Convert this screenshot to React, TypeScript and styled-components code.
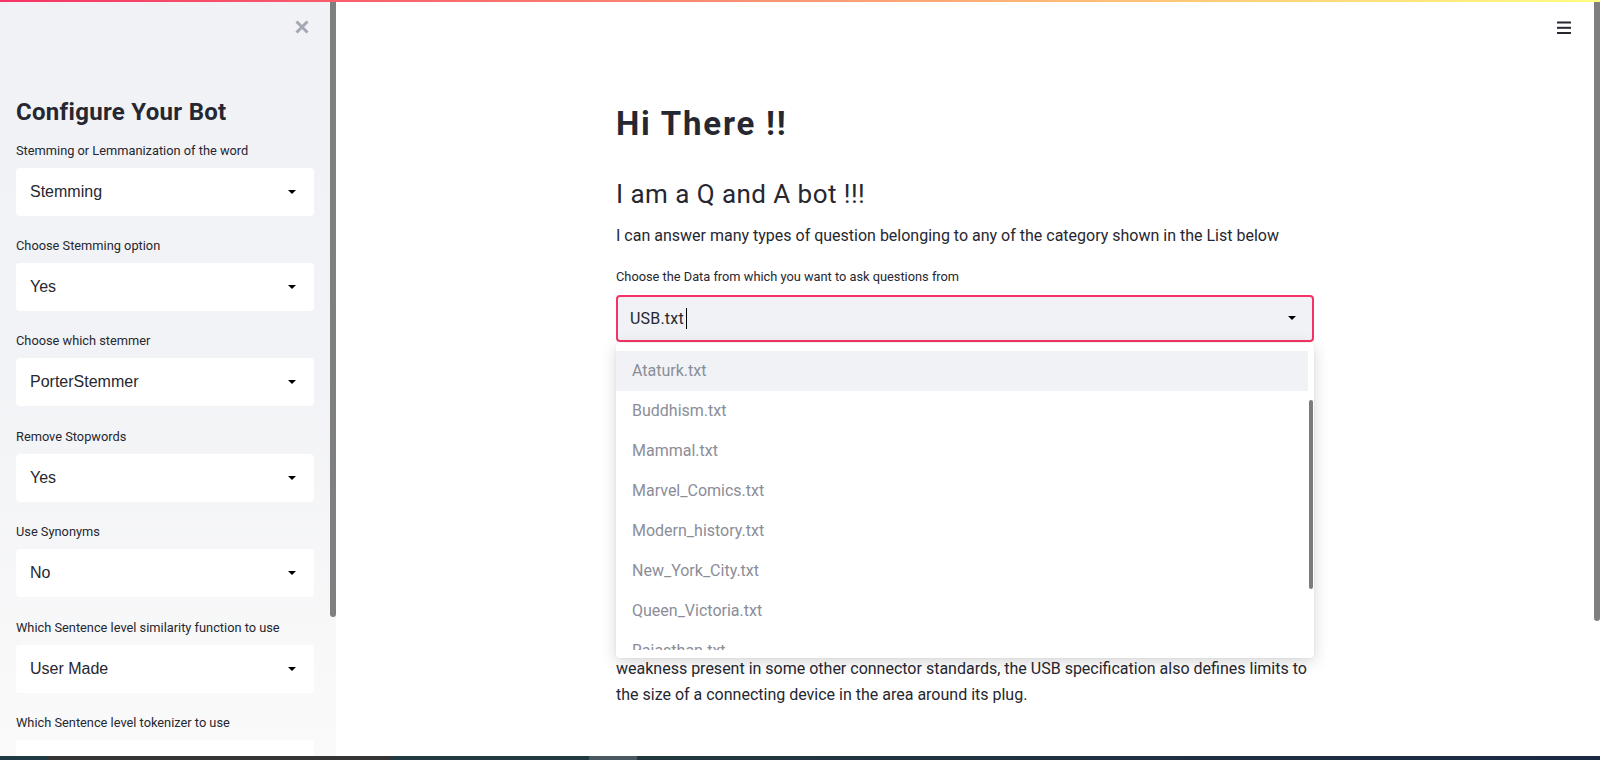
import React from "react";
import styled, { createGlobalStyle } from "styled-components";

const plex = `Roboto, "Liberation Sans", sans-serif`;
const arial = `"Liberation Sans", Arial, sans-serif`;

const GlobalStyle = createGlobalStyle`
  html, body {
    margin: 0;
    padding: 0;
    width: 1600px;
    height: 760px;
    overflow: hidden;
    background: #ffffff;
  }
  body {
    font-family: ${plex};
    color: #262730;
  }
  *, *::before, *::after { box-sizing: border-box; }
`;

const Page = styled.div`
  position: relative;
  width: 1600px;
  height: 760px;
  display: flex;
  flex-direction: column;
`;

const Decoration = styled.div`
  position: absolute;
  top: 0;
  left: 0;
  right: 0;
  height: 2px;
  background: linear-gradient(90deg, #f63366, #fffd80);
  z-index: 20;
`;

const Body = styled.div`
  flex: 1;
  min-height: 0;
  display: flex;
`;

const Sidebar = styled.aside`
  flex: none;
  width: 336px;
  display: flex;
  background: linear-gradient(180deg, #f0f2f6 0%, #f2f3f6 50%, #fafafa 100%);
`;

const SidebarInner = styled.div`
  flex: 1;
  display: flex;
  flex-direction: column;
  padding: 20px 16px 0 16px;
  overflow: hidden;
`;

const CloseButton = styled.div`
  align-self: flex-end;
  width: 14px;
  height: 14px;
  margin-right: 5px;
  display: flex;
`;

const SidebarTitle = styled.h2`
  margin: 62.8px 0 0 0;
  font-size: 24px;
  line-height: 30px;
  font-weight: 700;
  letter-spacing: 0.3px;
  color: #262730;
`;

const Fields = styled.div`
  margin-top: 13.8px;
  display: flex;
  flex-direction: column;
  gap: 20.4px;
`;

const Field = styled.div`
  display: flex;
  flex-direction: column;
  gap: 7px;
`;

const Label = styled.label`
  font-size: 12.8px;
  line-height: 20px;
  color: #262730;
  white-space: nowrap;
`;

const SideSelect = styled.div`
  height: 48px;
  background: #ffffff;
  border-radius: 4px;
  display: flex;
  align-items: center;
  justify-content: space-between;
  padding: 0 18px 0 14px;
  font-family: ${arial};
  font-size: 16px;
  color: #262730;
`;

const Rail = styled.div`
  flex: none;
  width: 6px;
  display: flex;
  flex-direction: column;
`;

const Thumb = styled.div<{ $h: number }>`
  height: ${(p) => p.$h}px;
  background: #7f7f7f;
  border-radius: 0 0 3px 3px;
`;

const Main = styled.main`
  flex: 1;
  min-width: 0;
  display: flex;
  flex-direction: column;
  align-items: center;
  overflow: hidden;
`;

const Header = styled.header`
  align-self: stretch;
  height: 60px;
  display: flex;
  justify-content: flex-end;
  padding: 21px 23px 0 0;
`;

const Block = styled.div`
  width: 698px;
  display: flex;
  flex-direction: column;
  padding-top: 44.4px;
`;

const Title = styled.h1`
  margin: 0;
  font-size: 33px;
  line-height: 40px;
  font-weight: 700;
  letter-spacing: 1.8px;
  color: #262730;
`;

const Subtitle = styled.h2`
  margin: 33px 0 0 0;
  font-size: 26px;
  line-height: 34px;
  font-weight: 400;
  letter-spacing: 0.45px;
  color: #262730;
`;

const Text = styled.p<{ $mt: number }>`
  margin: ${(p) => p.$mt}px 0 0 0;
  font-size: 16px;
  line-height: 25.6px;
  color: #262730;
  white-space: nowrap;
`;

const MainLabel = styled(Label)`
  margin-top: 18.3px;
`;

const SelectWrap = styled.div`
  position: relative;
  margin-top: 7.9px;
  z-index: 5;
`;

const MainSelect = styled.div`
  height: 47px;
  border: 2px solid #f63366;
  border-radius: 4px;
  background: #f0f2f6;
  display: flex;
  align-items: center;
  padding: 0 16px 0 12px;
  font-size: 16px;
  letter-spacing: 0.2px;
  color: #262730;
`;

const SelectValue = styled.span`
  flex: 1;
  display: flex;
  align-items: center;
`;

const Caret = styled.span`
  width: 1px;
  height: 21px;
  background: #000;
  margin-left: 2px;
`;

const Menu = styled.div`
  position: absolute;
  top: calc(100% + 1px);
  left: 0;
  right: 0;
  background: #ffffff;
  border-radius: 4px;
  box-shadow: 0 4px 16px rgba(0, 0, 0, 0.16), 0 0 2px rgba(0, 0, 0, 0.08);
  padding: 8px 0 8px 0;
`;

const MenuList = styled.ul`
  list-style: none;
  margin: 0;
  padding: 0;
  height: 299px;
  overflow: hidden;
`;

const MenuItem = styled.li<{ $active?: boolean }>`
  height: 40px;
  display: flex;
  align-items: center;
  padding-left: 16px;
  margin-right: 6px;
  font-size: 16px;
  color: #8b8d98;
  background: ${(p) => (p.$active ? "#f0f2f6" : "transparent")};
`;

const MenuThumb = styled.div`
  position: absolute;
  right: 1px;
  top: 57px;
  width: 4px;
  height: 189px;
  border-radius: 2px;
  background: #7b7b7b;
`;

const Taskbar = styled.footer`
  flex: none;
  height: 4px;
  display: flex;
`;

const TaskSeg = styled.div<{ $w?: number; $bg: string }>`
  ${(p) => (p.$w ? `width: ${p.$w}px; flex: none;` : "flex: 1;")}
  background: ${(p) => p.$bg};
`;

const CaretIcon = () => (
  <svg width="8" height="4" viewBox="0 0 8 4">
    <path d="M0 0 L8 0 L4 4 Z" fill="#000" />
  </svg>
);

const CloseIcon = () => (
  <svg width="14" height="14" viewBox="0 0 14 14">
    <path d="M1.5 1.5 L12.5 12.5 M12.5 1.5 L1.5 12.5" stroke="#a3a8b4" strokeWidth="3" />
  </svg>
);

const Hamburger = () => (
  <svg width="14" height="14" viewBox="0 0 14 14">
    <rect x="0" y="0.5" width="14" height="2" fill="#262730" />
    <rect x="0" y="5.8" width="14" height="2" fill="#262730" />
    <rect x="0" y="11" width="14" height="2" fill="#262730" />
  </svg>
);

const sideFields = [
  { label: "Stemming or Lemmanization of the word", value: "Stemming" },
  { label: "Choose Stemming option", value: "Yes" },
  { label: "Choose which stemmer", value: "PorterStemmer" },
  { label: "Remove Stopwords", value: "Yes" },
  { label: "Use Synonyms", value: "No" },
  { label: "Which Sentence level similarity function to use", value: "User Made" },
  { label: "Which Sentence level tokenizer to use", value: "" },
];

const files = [
  "Ataturk.txt",
  "Buddhism.txt",
  "Mammal.txt",
  "Marvel_Comics.txt",
  "Modern_history.txt",
  "New_York_City.txt",
  "Queen_Victoria.txt",
  "Rajasthan.txt",
];

export default function App() {
  return (
    <Page>
      <GlobalStyle />
      <Decoration />
      <Body>
        <Sidebar>
          <SidebarInner>
            <CloseButton>
              <CloseIcon />
            </CloseButton>
            <SidebarTitle>Configure Your Bot</SidebarTitle>
            <Fields>
              {sideFields.map((f) => (
                <Field key={f.label}>
                  <Label>{f.label}</Label>
                  <SideSelect>
                    <span>{f.value}</span>
                    <CaretIcon />
                  </SideSelect>
                </Field>
              ))}
            </Fields>
          </SidebarInner>
          <Rail>
            <Thumb $h={617} />
          </Rail>
        </Sidebar>
        <Main>
          <Header>
            <Hamburger />
          </Header>
          <Block>
            <Title>Hi There !!</Title>
            <Subtitle>I am a Q and A bot !!!</Subtitle>
            <Text $mt={11.8}>
              I can answer many types of question belonging to any of the category shown in the List below
            </Text>
            <MainLabel>Choose the Data from which you want to ask questions from</MainLabel>
            <SelectWrap>
              <MainSelect>
                <SelectValue>
                  USB.txt
                  <Caret />
                </SelectValue>
                <CaretIcon />
              </MainSelect>
              <Menu>
                <MenuList>
                  {files.map((f, i) => (
                    <MenuItem key={f} $active={i === 0}>
                      {f}
                    </MenuItem>
                  ))}
                </MenuList>
                <MenuThumb />
              </Menu>
            </SelectWrap>
            <Text $mt={314.2}>
              weakness present in some other connector standards, the USB specification also defines limits to
              <br />
              the size of a connecting device in the area around its plug.
            </Text>
          </Block>
        </Main>
        <Rail>
          <Thumb $h={621} />
        </Rail>
      </Body>
      <Taskbar>
        <TaskSeg $w={48} $bg="#1f3a42" />
        <TaskSeg $w={343} $bg="#343434" />
        <TaskSeg $w={198} $bg="#213a41" />
        <TaskSeg $w={48} $bg="#4a5961" />
        <TaskSeg $bg="linear-gradient(90deg, #22383f, #1b2843)" />
      </Taskbar>
    </Page>
  );
}
